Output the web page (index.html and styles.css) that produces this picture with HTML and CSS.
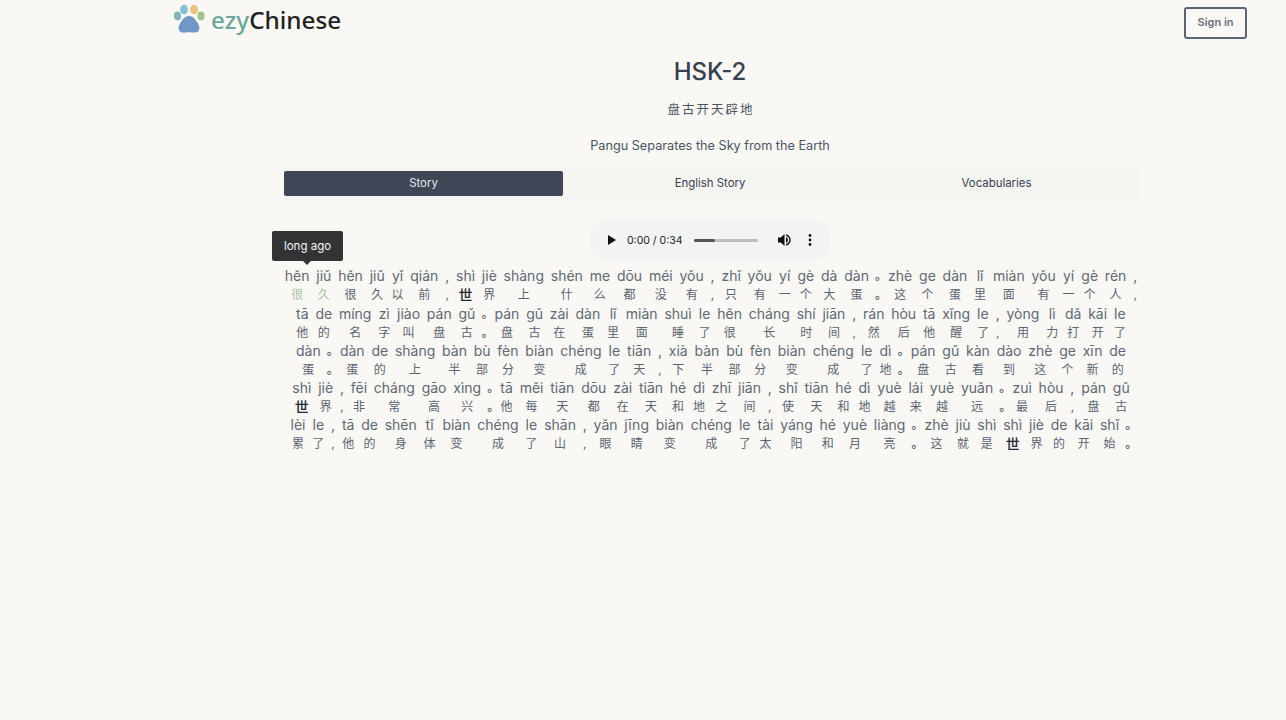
FILE: index.html
```html
<!DOCTYPE html>
<html lang="en">
<head>
    <meta charset="UTF-8">
    <meta name="viewport" content="width=device-width, initial-scale=1.0">
    <title>HSK-2 Story</title>
    <link rel="stylesheet" href="styles.css">
</head>
<body>
    <header class="site-header">
        <a class="logo" href="#">
            <svg class="paw" width="34" height="32" viewBox="0 0 34 32">
                <ellipse cx="4.5" cy="13" rx="3.6" ry="4.4" fill="#7db7b8"/>
                <ellipse cx="11" cy="6.5" rx="3.9" ry="4.8" fill="#86c0d8"/>
                <ellipse cx="21" cy="6.5" rx="3.9" ry="4.8" fill="#eec27e"/>
                <ellipse cx="28" cy="13" rx="3.6" ry="4.4" fill="#a3c48c"/>
                <path d="M16 13c4 0 6 3 8 6 2 3 3 5 2 8-1 3-5 3-10 2-5 1-9 1-10-2-1-3 0-5 2-8 2-3 4-6 8-6z" fill="#6f98c6"/>
            </svg>
            <span class="logo-text"><span class="logo-ezy">ezy</span>Chinese</span>
        </a>
        <button class="sign-in">Sign in</button>
    </header>

    <main class="content">
        <h1>HSK-2</h1>
        <p class="title-zh">盘古开天辟地</p>
        <p class="title-en">Pangu Separates the Sky from the Earth</p>

        <nav class="tabs">
            <a class="tab active" href="#">Story</a>
            <a class="tab" href="#">English Story</a>
            <a class="tab" href="#">Vocabularies</a>
        </nav>

        <div class="player">
            <svg class="play" width="10" height="12" viewBox="0 0 10 12"><path d="M1 1v10l8-5z"/></svg>
            <span class="time">0:00 / 0:34</span>
            <div class="track"><div class="track-fill"></div></div>
            <svg class="volume" width="14" height="14" viewBox="0 0 14 14"><path d="M1 4.5v5h2.8L7.5 13V1L3.8 4.5z"/><path d="M9 4v6c1.2-.6 1.9-1.7 1.9-3S10.200 4.600 9 4z"/><path d="M9 1.300v1.500c1.900.6 3.300 2.300 3.300 4.200s-1.400 3.600-3.300 4.200v1.500c2.700-.6 4.700-3 4.700-5.700S11.700 1.900 9 1.300z"/></svg>
            <svg class="more" width="4" height="12" viewBox="0 0 4 12"><circle cx="2" cy="1.500" r="1.400"/><circle cx="2" cy="6" r="1.400"/><circle cx="2" cy="10.500" r="1.400"/></svg>
        </div>

        <div class="story">
            <div class="tooltip">long ago</div>
            <div class="line"><ruby class="seen">很<rt>hěn</rt></ruby> <ruby class="seen">久<rt>jiǔ</rt></ruby> <ruby>很<rt>hěn</rt></ruby> <ruby>久<rt>jiǔ</rt></ruby> <ruby>以<rt>yǐ</rt></ruby> <ruby>前<rt>qián</rt></ruby> <ruby>,<rt>,</rt></ruby> <ruby class="dark">世<rt>shì</rt></ruby> <ruby>界<rt>jiè</rt></ruby> <ruby>上<rt>shàng</rt></ruby> <ruby>什<rt>shén</rt></ruby> <ruby>么<rt>me</rt></ruby> <ruby>都<rt>dōu</rt></ruby> <ruby>没<rt>méi</rt></ruby> <ruby>有<rt>yǒu</rt></ruby> <ruby>,<rt>,</rt></ruby> <ruby>只<rt>zhǐ</rt></ruby> <ruby>有<rt>yǒu</rt></ruby> <ruby>一<rt>yí</rt></ruby> <ruby>个<rt>gè</rt></ruby> <ruby>大<rt>dà</rt></ruby> <ruby>蛋<rt>dàn</rt></ruby> <ruby class="stop">。<rt>。</rt></ruby> <ruby>这<rt>zhè</rt></ruby> <ruby>个<rt>ge</rt></ruby> <ruby>蛋<rt>dàn</rt></ruby> <ruby>里<rt>lǐ</rt></ruby> <ruby>面<rt>miàn</rt></ruby> <ruby>有<rt>yǒu</rt></ruby> <ruby>一<rt>yí</rt></ruby> <ruby>个<rt>gè</rt></ruby> <ruby>人<rt>rén</rt></ruby> <ruby>,<rt>,</rt></ruby></div>
            <div class="line"><ruby>他<rt>tā</rt></ruby> <ruby>的<rt>de</rt></ruby> <ruby>名<rt>míng</rt></ruby> <ruby>字<rt>zì</rt></ruby> <ruby>叫<rt>jiào</rt></ruby> <ruby>盘<rt>pán</rt></ruby> <ruby>古<rt>gǔ</rt></ruby> <ruby class="stop">。<rt>。</rt></ruby> <ruby>盘<rt>pán</rt></ruby> <ruby>古<rt>gǔ</rt></ruby> <ruby>在<rt>zài</rt></ruby> <ruby>蛋<rt>dàn</rt></ruby> <ruby>里<rt>lǐ</rt></ruby> <ruby>面<rt>miàn</rt></ruby> <ruby>睡<rt>shuì</rt></ruby> <ruby>了<rt>le</rt></ruby> <ruby>很<rt>hěn</rt></ruby> <ruby>长<rt>cháng</rt></ruby> <ruby>时<rt>shí</rt></ruby> <ruby>间<rt>jiān</rt></ruby> <ruby>,<rt>,</rt></ruby> <ruby>然<rt>rán</rt></ruby> <ruby>后<rt>hòu</rt></ruby> <ruby>他<rt>tā</rt></ruby> <ruby>醒<rt>xǐng</rt></ruby> <ruby>了<rt>le</rt></ruby> <ruby>,<rt>,</rt></ruby> <ruby>用<rt>yòng</rt></ruby> <ruby>力<rt>lì</rt></ruby> <ruby>打<rt>dǎ</rt></ruby> <ruby>开<rt>kāi</rt></ruby> <ruby>了<rt>le</rt></ruby></div>
            <div class="line"><ruby>蛋<rt>dàn</rt></ruby> <ruby class="stop">。<rt>。</rt></ruby> <ruby>蛋<rt>dàn</rt></ruby> <ruby>的<rt>de</rt></ruby> <ruby>上<rt>shàng</rt></ruby> <ruby>半<rt>bàn</rt></ruby> <ruby>部<rt>bù</rt></ruby> <ruby>分<rt>fèn</rt></ruby> <ruby>变<rt>biàn</rt></ruby> <ruby>成<rt>chéng</rt></ruby> <ruby>了<rt>le</rt></ruby> <ruby>天<rt>tiān</rt></ruby> <ruby>,<rt>,</rt></ruby> <ruby>下<rt>xià</rt></ruby> <ruby>半<rt>bàn</rt></ruby> <ruby>部<rt>bù</rt></ruby> <ruby>分<rt>fèn</rt></ruby> <ruby>变<rt>biàn</rt></ruby> <ruby>成<rt>chéng</rt></ruby> <ruby>了<rt>le</rt></ruby> <ruby>地<rt>dì</rt></ruby> <ruby class="stop">。<rt>。</rt></ruby> <ruby>盘<rt>pán</rt></ruby> <ruby>古<rt>gǔ</rt></ruby> <ruby>看<rt>kàn</rt></ruby> <ruby>到<rt>dào</rt></ruby> <ruby>这<rt>zhè</rt></ruby> <ruby>个<rt>ge</rt></ruby> <ruby>新<rt>xīn</rt></ruby> <ruby>的<rt>de</rt></ruby></div>
            <div class="line"><ruby class="dark">世<rt>shì</rt></ruby> <ruby>界<rt>jiè</rt></ruby> <ruby>,<rt>,</rt></ruby> <ruby>非<rt>fēi</rt></ruby> <ruby>常<rt>cháng</rt></ruby> <ruby>高<rt>gāo</rt></ruby> <ruby>兴<rt>xìng</rt></ruby> <ruby class="stop">。<rt>。</rt></ruby> <ruby>他<rt>tā</rt></ruby> <ruby>每<rt>měi</rt></ruby> <ruby>天<rt>tiān</rt></ruby> <ruby>都<rt>dōu</rt></ruby> <ruby>在<rt>zài</rt></ruby> <ruby>天<rt>tiān</rt></ruby> <ruby>和<rt>hé</rt></ruby> <ruby>地<rt>dì</rt></ruby> <ruby>之<rt>zhī</rt></ruby> <ruby>间<rt>jiān</rt></ruby> <ruby>,<rt>,</rt></ruby> <ruby>使<rt>shǐ</rt></ruby> <ruby>天<rt>tiān</rt></ruby> <ruby>和<rt>hé</rt></ruby> <ruby>地<rt>dì</rt></ruby> <ruby>越<rt>yuè</rt></ruby> <ruby>来<rt>lái</rt></ruby> <ruby>越<rt>yuè</rt></ruby> <ruby>远<rt>yuǎn</rt></ruby> <ruby class="stop">。<rt>。</rt></ruby> <ruby>最<rt>zuì</rt></ruby> <ruby>后<rt>hòu</rt></ruby> <ruby>,<rt>,</rt></ruby> <ruby>盘<rt>pán</rt></ruby> <ruby>古<rt>gǔ</rt></ruby></div>
            <div class="line"><ruby>累<rt>lèi</rt></ruby> <ruby>了<rt>le</rt></ruby> <ruby>,<rt>,</rt></ruby> <ruby>他<rt>tā</rt></ruby> <ruby>的<rt>de</rt></ruby> <ruby>身<rt>shēn</rt></ruby> <ruby>体<rt>tǐ</rt></ruby> <ruby>变<rt>biàn</rt></ruby> <ruby>成<rt>chéng</rt></ruby> <ruby>了<rt>le</rt></ruby> <ruby>山<rt>shān</rt></ruby> <ruby>,<rt>,</rt></ruby> <ruby>眼<rt>yǎn</rt></ruby> <ruby>睛<rt>jīng</rt></ruby> <ruby>变<rt>biàn</rt></ruby> <ruby>成<rt>chéng</rt></ruby> <ruby>了<rt>le</rt></ruby> <ruby>太<rt>tài</rt></ruby> <ruby>阳<rt>yáng</rt></ruby> <ruby>和<rt>hé</rt></ruby> <ruby>月<rt>yuè</rt></ruby> <ruby>亮<rt>liàng</rt></ruby> <ruby class="stop">。<rt>。</rt></ruby> <ruby>这<rt>zhè</rt></ruby> <ruby>就<rt>jiù</rt></ruby> <ruby>是<rt>shì</rt></ruby> <ruby class="dark">世<rt>shì</rt></ruby> <ruby>界<rt>jiè</rt></ruby> <ruby>的<rt>de</rt></ruby> <ruby>开<rt>kāi</rt></ruby> <ruby>始<rt>shǐ</rt></ruby> <ruby class="stop">。<rt>。</rt></ruby></div>
        </div>
    </main>
</body>
</html>
```

FILE: styles.css
```css
body {
    margin: 0;
    padding: 0 39px 0 173px;
    background: #f9f8f4;
    font-family: 'Inter', 'Noto Sans CJK SC', sans-serif;
    color: #4b5563;
}

.site-header {
    display: flex;
    justify-content: space-between;
    align-items: flex-start;
    height: 46px;
}

.logo {
    display: flex;
    align-items: center;
    gap: 4px;
    height: 38px;
    text-decoration: none;
}

.logo-text {
    font-family: 'Noto Sans', sans-serif;
    font-size: 24.3px;
    font-weight: 500;
    color: #222;
}

.logo-ezy {
    color: #6aa999;
}

.sign-in {
    margin-top: 7px;
    width: 63px;
    height: 32px;
    padding: 0 0 2px;
    background: transparent;
    border: 2px solid #5b6472;
    border-radius: 3px;
    font-family: inherit;
    font-size: 11px;
    font-weight: 600;
    color: #6b7280;
}

.content {
    width: 856px;
    margin: 0 auto;
    position: relative;
    left: 2px;
    text-align: center;
}

h1 {
    margin: 9px 0 0;
    font-size: 24px;
    line-height: 34px;
    font-weight: 500;
    color: #374151;
    position: relative;
    left: -2px;
}

.title-zh {
    margin: 11px 0 0;
    font-size: 12.5px;
    line-height: 20px;
    letter-spacing: 2px;
    color: #4b5563;
    position: relative;
    left: -1px;
}

.title-en {
    margin: 16px 0 0;
    font-size: 12.7px;
    line-height: 20px;
    color: #4b5563;
    position: relative;
    left: -2px;
}

.tabs {
    display: grid;
    grid-template-columns: 279px 294px 279px;
    margin-top: 12px;
    padding: 3px 4px 4px 0;
    background: #f4f4f1;
}

.tab {
    height: 25px;
    line-height: 25px;
    font-size: 11.4px;
    color: #374151;
    text-decoration: none;
}

.tab.active {
    background: #3f4756;
    border-radius: 2px;
    color: #e5e7eb;
}

.player {
    display: flex;
    align-items: center;
    width: 242px;
    height: 42px;
    margin: 19px auto 0;
    padding-left: 18px;
    box-sizing: border-box;
    background: #f1f3f4;
    border-radius: 21px;
    position: relative;
    left: -2px;
}

.play {
    fill: #111;
}

.time {
    margin-left: 10px;
    font-size: 10.5px;
    color: #222;
    white-space: nowrap;
}

.track {
    width: 64px;
    height: 3px;
    margin-left: 11px;
    background: #bdbfc0;
    border-radius: 2px;
}

.track-fill {
    width: 21px;
    height: 3px;
    background: #555;
    border-radius: 2px;
}

.volume {
    margin-left: 19px;
    fill: #111;
}

.more {
    margin-left: 17px;
    fill: #111;
}

.story {
    margin: 5px -6px 0;
    position: relative;
    font-size: 0;
    line-height: 0;
    text-align: center;
    left: -1px;
}

.line {
    height: 37.3px;
    white-space: nowrap;
}

.tooltip {
    position: absolute;
    left: -5px;
    top: -35px;
    width: 71px;
    height: 30px;
    background: #333;
    border-radius: 2px;
    font-size: 11.5px;
    line-height: 30px;
    color: #f3f4f6;
}

.tooltip::after {
    content: "";
    position: absolute;
    left: 31px;
    bottom: -4px;
    border-left: 4px solid transparent;
    border-right: 4px solid transparent;
    border-top: 4px solid #333;
}

.story ruby {
    display: inline-flex;
    flex-direction: column-reverse;
    align-items: center;
    height: 37.3px;
    margin: 0 3.4px;
    font-size: 12px;
    line-height: 17px;
    color: #5b6472;
    vertical-align: top;
}

.story rt {
    display: block;
    font-size: 14px;
    font-weight: 400;
    line-height: 20px;
    color: #5f6875;
}

.story ruby.seen {
    color: #a9c49d;
}

.story ruby.dark {
    color: #1f2937;
    font-size: 14px;
    font-weight: 500;
}

.story ruby.stop {
    margin: 0 -2.3px 0 2.7px;
}

.story ruby.stop,
.story ruby.stop rt {
    font-size: 12px;
    font-weight: 700;
}
```
